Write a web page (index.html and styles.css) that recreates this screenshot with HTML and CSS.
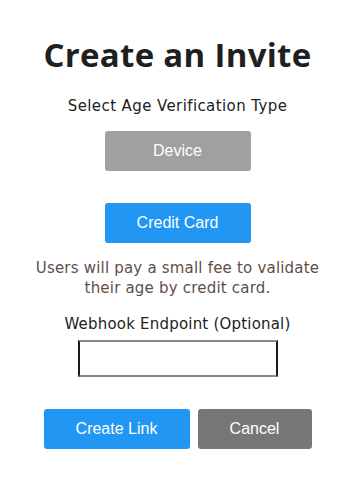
FILE: index.html
```html
<!DOCTYPE html>
<html>
<head>
<meta charset="utf-8">
<link rel="stylesheet" href="styles.css">
</head>
<body>
<div class="page">
  <h1 class="title">Create an Invite</h1>
  <p class="subtitle">Select Age Verification Type</p>
  <button class="btn btn-option btn-grey">Device</button>
  <button class="btn btn-option btn-blue">Credit Card</button>
  <p class="desc">Users will pay a small fee to validate their age by credit card.</p>
  <label class="label" for="hook">Webhook Endpoint (Optional)</label>
  <input class="input" id="hook" type="text">
  <div class="actions">
    <button class="btn btn-blue btn-create">Create Link</button>
    <button class="btn btn-dark btn-cancel">Cancel</button>
  </div>
</div>
</body>
</html>
```
FILE: styles.css
```css
html, body {
  margin: 0;
  padding: 0;
  background: #fff;
}
.page {
  display: flex;
  flex-direction: column;
  align-items: center;
  padding-top: 33px;
  font-family: "DejaVu Sans", "Open Sans", sans-serif;
}
.title {
  margin: 0;
  font-family: "Open Sans", sans-serif;
  font-size: 33px;
  line-height: 44px;
  font-weight: 700;
  color: #1f1f1f;
  letter-spacing: 0.3px;
}
.subtitle {
  margin: 19px 0 0;
  font-size: 15px;
  line-height: 20px;
  letter-spacing: 0.4px;
  color: #222;
}
.btn {
  border: none;
  border-radius: 3px;
  color: #fff;
  font-family: "Liberation Sans", Arial, sans-serif;
  font-size: 16px;
  height: 40px;
  padding: 0;
}
.btn-option {
  width: 146px;
}
.btn-grey {
  background: #a0a0a0;
  margin-top: 15px;
}
.btn-blue {
  background: #2196f3;
}
.btn-option.btn-blue {
  margin-top: 32px;
}
.btn-dark {
  background: #777777;
}
.desc {
  margin: 15px 0 0;
  width: 300px;
  text-align: center;
  font-size: 15px;
  line-height: 20px;
  letter-spacing: 0.2px;
  color: #5e4f47;
}
.label {
  margin-top: 16px;
  font-size: 15px;
  line-height: 20px;
  letter-spacing: 0.2px;
  color: #222;
}
.input {
  margin-top: 6px;
  width: 200px;
  height: 37px;
  box-sizing: border-box;
  border-style: solid;
  border-width: 2px;
  border-color: #8a8a8a #1a1a1a #8a8a8a #1a1a1a;
}
.actions {
  margin-top: 32px;
  display: flex;
  gap: 8px;
}
.btn-create {
  width: 146px;
}
.btn-cancel {
  width: 114px;
}
```
